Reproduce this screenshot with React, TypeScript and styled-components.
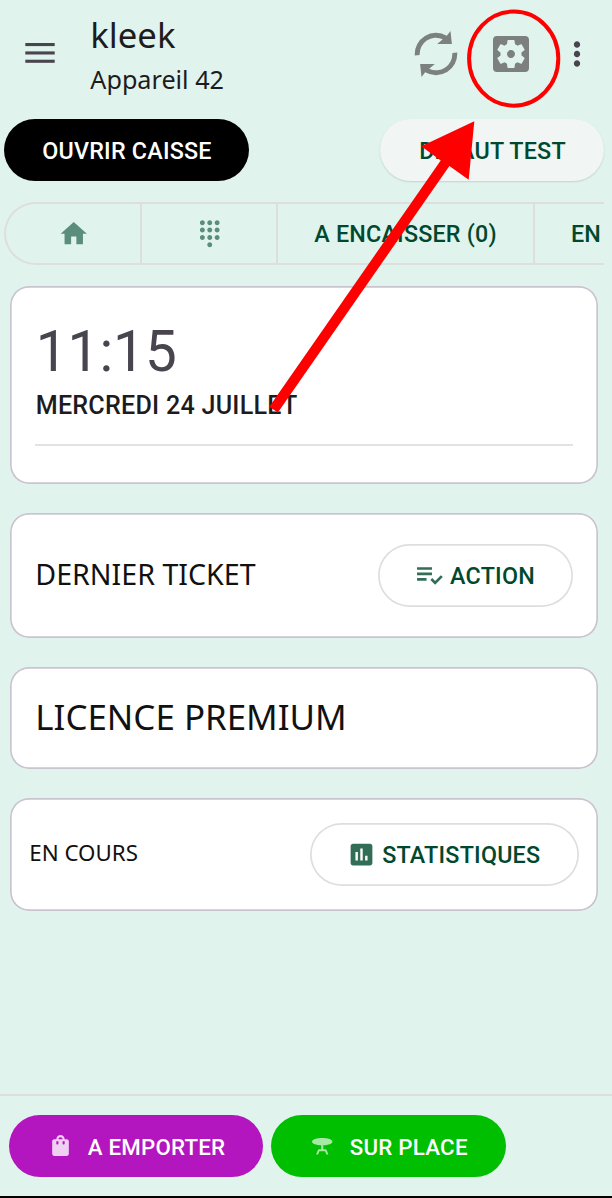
import React from "react";
import styled, { createGlobalStyle } from "styled-components";
import {
  MdAssessment,
  MdDialpad,
  MdHome,
  MdMoreVert,
  MdPlaylistAddCheck,
  MdSettingsApplications,
  MdShoppingBag,
  MdTableBar,
} from "react-icons/md";

const GlobalStyle = createGlobalStyle`
  * { box-sizing: border-box; }
  body { margin: 0; background: #e0f4ed; }
  svg { display: block; flex: none; }
`;

const Screen = styled.div`
  position: relative;
  width: 612px;
  height: 1198px;
  overflow: hidden;
  display: flex;
  flex-direction: column;
  background: #e0f4ed;
  font-family: Roboto, "Liberation Sans", sans-serif;
  color: #1d1b20;
`;

const Header = styled.header`
  display: flex;
  flex: none;
  align-items: flex-start;
  height: 118.5px;
  padding: 0 16px 0 24px;
`;

const MenuIcon = styled.svg`
  margin: 42px 35.3px 0 1px;
`;

const Titles = styled.div`
  flex: 1;
  font-family: "Noto Sans", sans-serif;
  white-space: nowrap;
`;

const Title = styled.h1`
  margin: 11px 0 0;
  font-size: 34.7px;
  line-height: 48px;
  font-weight: 400;
`;

const Subtitle = styled.div`
  margin-top: 3px;
  font-size: 25.2px;
  line-height: 34px;
`;

const Actions = styled.div`
  display: flex;
  align-items: center;
  height: 108px;
  color: #7c817f;
`;

const SyncIcon = styled.svg`
  margin-right: 27px;
`;

const MoreSlot = styled.span`
  margin-left: 23px;
  color: #49454f;
`;

const Pill = styled.button<{
  $width: number;
  $bg?: string;
  $color?: string;
  $outlined?: boolean;
  $gap?: number;
  $raised?: boolean;
  $size?: number;
  $inset?: string;
}>`
  display: flex;
  align-items: center;
  justify-content: center;
  gap: ${(p) => p.$gap ?? 0}px;
  flex: none;
  width: ${(p) => p.$width}px;
  height: 62.5px;
  padding: ${(p) => p.$inset ?? "0"};
  border: 0;
  border-radius: 32px;
  background: ${(p) => p.$bg ?? "#fff"};
  color: ${(p) => p.$color ?? "#00492f"};
  box-shadow: ${(p) =>
    p.$raised
      ? "0 1px 2px rgba(0, 0, 0, 0.14)"
      : p.$outlined
        ? "inset 0 0 0 1.7px #dedede"
        : "none"};
  font: 500 ${(p) => p.$size ?? 23.3}px/30px Roboto, "Liberation Sans", sans-serif;
  letter-spacing: 0.22px;
  white-space: nowrap;
`;

const IconTint = styled.span<{ $opacity: number }>`
  display: flex;
  opacity: ${(p) => p.$opacity};
`;

const TopRow = styled.div`
  display: flex;
  flex: none;
  justify-content: space-between;
  padding: 0 8px 0 4px;
`;

const Label = styled.span`
  padding-top: 2px;
`;

const Tabs = styled.nav`
  display: flex;
  flex: none;
  width: 600px;
  height: 62.5px;
  margin: 21px 0 0 4px;
  border: 2px solid #dedede;
  border-right: 0;
  border-radius: 32px 0 0 32px;
  overflow: hidden;
  font-weight: 500;
  font-size: 23.3px;
  letter-spacing: 0.2px;
  color: #00492f;
`;

const Tab = styled.div<{ $width: number; $open?: boolean }>`
  display: flex;
  align-items: center;
  justify-content: ${(p) => (p.$open ? "flex-start" : "center")};
  flex: none;
  width: ${(p) => p.$width}px;
  padding-left: ${(p) => (p.$open ? 36.5 : 0.6)}px;
  border-right: ${(p) => (p.$open ? 0 : 2)}px solid #dedede;
  white-space: nowrap;
`;

const Cards = styled.main`
  display: flex;
  flex-direction: column;
  flex: 1;
  gap: 29.3px;
  padding: 21px 14px 0 10.3px;
`;

const Card = styled.section<{ $height: number; $pad?: string }>`
  display: flex;
  flex: none;
  align-items: center;
  justify-content: space-between;
  height: ${(p) => p.$height}px;
  padding: ${(p) => p.$pad ?? "0 25px"};
  box-shadow: inset 0 0 0 1.7px #cac4d0;
  border-radius: 19px;
  background: #fff;
`;

const ClockCard = styled(Card)`
  flex-direction: column;
  align-items: stretch;
  justify-content: flex-start;
`;

const Time = styled.div`
  margin-top: 32.5px;
  padding-left: 0.5px;
  font-size: 56.6px;
  line-height: 67px;
  color: #49454f;
`;

const DateLine = styled.div`
  height: 57px;
  padding: 2.5px 0 0 0.4px;
  margin-top: 2px;
  font-size: 25.1px;
  line-height: 32px;
  font-weight: 500;
  letter-spacing: 0.25px;
`;

const Rule = styled.hr`
  width: 100%;
  height: 2px;
  margin: 0;
  border: 0;
  background: #e2e2e2;
`;

const CardText = styled.div<{ $size: number }>`
  padding-bottom: 1.5px;
  font-family: "Noto Sans", sans-serif;
  font-size: ${(p) => p.$size}px;
  line-height: 1.36;
  color: #111;
  white-space: nowrap;
`;

const Footer = styled.footer`
  display: flex;
  flex: none;
  gap: 8px;
  height: 104px;
  padding: 18.6px 8.5px 0;
  border-top: 2px solid #dedede;
  border-bottom: 2px solid #000;
`;

const Annotation = styled.svg`
  position: absolute;
  inset: 0;
  pointer-events: none;
`;

export default function App() {
  return (
    <>
      <GlobalStyle />
      <Screen>
        <Header>
          <MenuIcon width="30" height="22" viewBox="0 0 30 22" fill="#49454f">
            <rect x="0.3" y="1" width="29.4" height="3.1" />
            <rect x="0.3" y="9.4" width="29.4" height="3.1" />
            <rect x="0.3" y="17.7" width="29.4" height="3.1" />
          </MenuIcon>
          <Titles>
            <Title>kleek</Title>
            <Subtitle>Appareil 42</Subtitle>
          </Titles>
          <Actions>
            <SyncIcon width="48" height="48" viewBox="-24 -24 48 48">
              <g id="half" fill="currentColor">
                <path d="M-21.2 1.4A21.2 21.2 0 0 1 10.8-18.2L14.5-23 15.9-10H1.2L6.8-14.8A16.3 16.3 0 0 0-16.3 1Z" />
              </g>
              <use href="#half" transform="rotate(180)" />
            </SyncIcon>
            <MdSettingsApplications size={48} />
            <MoreSlot>
              <MdMoreVert size={38} />
            </MoreSlot>
          </Actions>
        </Header>

        <TopRow>
          <Pill $width={245} $bg="#000" $color="#fff" $inset="0 0 0 1px">
            <Label>OUVRIR CAISSE</Label>
          </Pill>
          <Pill $width={224} $bg="#f1f5f4" $raised $inset="0 0 0 1px">
            <Label>DEFAUT TEST</Label>
          </Pill>
        </TopRow>

        <Tabs>
          <Tab $width={136}>
            <IconTint $opacity={0.6}>
              <MdHome size={31.5} />
            </IconTint>
          </Tab>
          <Tab $width={136}>
            <IconTint $opacity={0.6}>
              <MdDialpad size={29.5} />
            </IconTint>
          </Tab>
          <Tab $width={256.5}>
            <Label>A ENCAISSER (0)</Label>
          </Tab>
          <Tab $width={80} $open>
            <Label>EN</Label>
          </Tab>
        </Tabs>

        <Cards>
          <ClockCard $height={198.2}>
            <Time>11:15</Time>
            <DateLine>MERCREDI 24 JUILLET</DateLine>
            <Rule />
          </ClockCard>
          <Card $height={124.7}>
            <CardText $size={28.6}>DERNIER TICKET</CardText>
            <Pill $width={195} $outlined $gap={5} $inset="0 3.5px 0 0">
              <IconTint $opacity={0.8}>
                <MdPlaylistAddCheck size={32.5} />
              </IconTint>
              <Label>ACTION</Label>
            </Pill>
          </Card>
          <Card $height={101.6}>
            <CardText $size={34.9}>LICENCE PREMIUM</CardText>
          </Card>
          <Card $height={113} $pad="0 19px 0 19px">
            <CardText $size={22.3}>EN COURS</CardText>
            <Pill $width={269} $outlined $gap={6.5} $inset="0 2px 0 0">
              <IconTint $opacity={0.8}>
                <MdAssessment size={29} />
              </IconTint>
              <Label>STATISTIQUES</Label>
            </Pill>
          </Card>
        </Cards>

        <Footer>
          <Pill $width={254.5} $bg="#b315bf" $color="#fff" $gap={15} $size={22.3} $inset="0 0 0 1.5px">
            <IconTint $opacity={0.8}>
              <MdShoppingBag size={25} />
            </IconTint>
            <Label>A EMPORTER</Label>
          </Pill>
          <Pill $width={234.5} $bg="#00be00" $color="#fff" $gap={15} $size={22.3} $inset="0 0 0 1.5px">
            <IconTint $opacity={0.65}>
              <MdTableBar size={24.5} />
            </IconTint>
            <Label>SUR PLACE</Label>
          </Pill>
        </Footer>

        <Annotation width="612" height="1198" viewBox="0 0 612 1198">
          <ellipse cx="513.7" cy="58.6" rx="44.6" ry="47.1" fill="none" stroke="#f00" strokeWidth="4" />
          <path
            d="M474.3 121.3 421.3 146.3 440.7 160.5 269.3 406.7 277.9 412.5 449.4 166 468.7 179.7Z"
            fill="#f00"
          />
        </Annotation>
      </Screen>
    </>
  );
}
